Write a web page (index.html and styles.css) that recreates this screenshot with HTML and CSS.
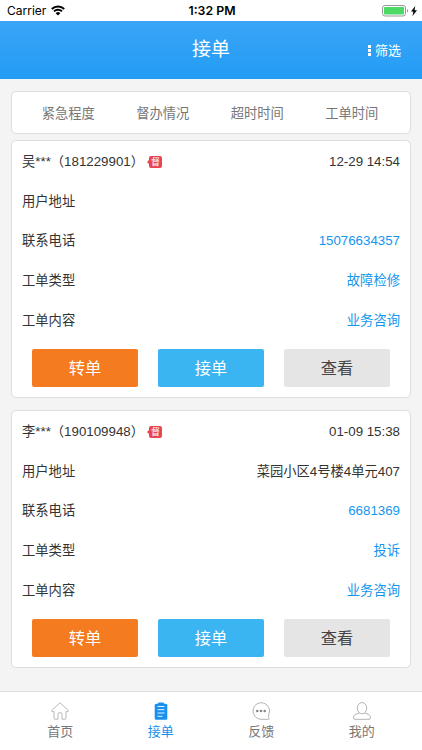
FILE: index.html
```html
<!DOCTYPE html>
<html lang="zh-CN">

<head>
    <meta charset="UTF-8">
    <meta name="viewport" content="width=device-width, initial-scale=1.0">
    <title>接单</title>
    <link rel="stylesheet" href="styles.css">
</head>

<body>
    <div class="status">
        <div class="carrier">
            <span>Carrier</span>
            <svg class="wifi" viewBox="0 0 14 11">
                <path d="M.8 4a8.800 8.800 0 0 1 12.400 0M3 6.400a5.700 5.700 0 0 1 8 0" fill="none" stroke="#000" stroke-width="2"/>
                <path d="M4.700 8.200a3.300 3.300 0 0 1 4.600 0L7 10.600z"/>
            </svg>
        </div>
        <div class="time">1:32 PM</div>
        <div class="power">
            <svg class="battery" viewBox="0 0 27 12">
                <rect x=".5" y=".5" width="23" height="10.500" rx="2.500" fill="none" stroke="#999"/>
                <rect x="2" y="2" width="20" height="7.500" rx="1" fill="#4cd964"/>
                <path d="M25 4v3.600q1.200-.5 1.200-1.800T25 4z" fill="#999"/>
            </svg>
            <svg class="bolt" viewBox="0 0 6 10">
                <path d="M4.300 0L0 5.600h2.400L1.500 10 6 4.200H3.500z"/>
            </svg>
        </div>
    </div>
    <div class="header">
        <h1>接单</h1>
        <div class="filter">
            <i class="dots"></i>
            <span>筛选</span>
        </div>
    </div>
    <div class="main">
        <ul class="sort">
            <li>紧急程度</li>
            <li>督办情况</li>
            <li>超时时间</li>
            <li>工单时间</li>
        </ul>
        <div class="card">
            <div class="row">
                <div class="name"><span>吴***（181229901）</span><b class="tag">督</b></div>
                <span>12-29 14:54</span>
            </div>
            <div class="row"><span>用户地址</span></div>
            <div class="row"><span>联系电话</span><span class="blue">15076634357</span></div>
            <div class="row"><span>工单类型</span><span class="blue">故障检修</span></div>
            <div class="row"><span>工单内容</span><span class="blue">业务咨询</span></div>
            <div class="btns">
                <div class="btn turn">转单</div>
                <div class="btn take">接单</div>
                <div class="btn look">查看</div>
            </div>
        </div>
        <div class="card">
            <div class="row">
                <div class="name"><span>李***（190109948）</span><b class="tag">督</b></div>
                <span>01-09 15:38</span>
            </div>
            <div class="row"><span>用户地址</span><span>菜园小区4号楼4单元407</span></div>
            <div class="row"><span>联系电话</span><span class="blue">6681369</span></div>
            <div class="row"><span>工单类型</span><span class="blue">投诉</span></div>
            <div class="row"><span>工单内容</span><span class="blue">业务咨询</span></div>
            <div class="btns">
                <div class="btn turn">转单</div>
                <div class="btn take">接单</div>
                <div class="btn look">查看</div>
            </div>
        </div>
    </div>
    <div class="tabbar">
        <div class="tab">
            <svg viewBox="0 0 18 18">
                <path d="M9 .7L.7 8.600q-.4 1 .6 1H3V16q0 1.200 1 1.200h3V11.500q0-.7.700-.7h2.600q.7 0 .7.700v5.700h3q1 0 1-1.200V9.600h1.700q1 0 .6-1z" fill="none" stroke="#b0b0b0" stroke-width=".9" stroke-linejoin="round"/>
            </svg>
            <span>首页</span>
        </div>
        <div class="tab active">
            <svg viewBox="0 0 18 18">
                <rect x="2.700" y="1.800" width="12.600" height="15.900" rx="1.500" fill="#1890f0"/>
                <rect x="6" y=".6" width="6" height="3" rx="1" fill="#1890f0"/>
                <path d="M5.500 4.500h7M5.500 7.700h7M5.500 11h7M5.500 14.300h5" stroke="#fff" stroke-width=".9"/>
            </svg>
            <span>接单</span>
        </div>
        <div class="tab">
            <svg viewBox="0 0 18 18">
                <path d="M16.800 12.500A8.300 8.300 0 1 0 9 17.300h7.700q1.200-.3.200-1.300-1-1.100-.1-3.500z" fill="none" stroke="#aaa" stroke-width=".9"/>
                <circle cx="5.300" cy="9" r="1.300" fill="#888"/>
                <circle cx="9" cy="9" r="1.300" fill="#888"/>
                <circle cx="12.700" cy="9" r="1.300" fill="#888"/>
            </svg>
            <span>反馈</span>
        </div>
        <div class="tab">
            <svg viewBox="0 0 18 18">
                <ellipse cx="9" cy="6.200" rx="4.700" ry="5.600" fill="none" stroke="#aaa" stroke-width=".9"/>
                <path d="M6.300 11.200C3 12 .5 12.600.5 15.800q0 1.500 1.500 1.500h14q1.500 0 1.500-1.500c0-3.200-2.500-3.800-5.800-4.600" fill="none" stroke="#aaa" stroke-width=".9"/>
            </svg>
            <span>我的</span>
        </div>
    </div>
</body>

</html>
```

FILE: styles.css
```css
body {
    display: flex;
    flex-direction: column;
    height: 750px;
    margin: 0;
    background-color: #f4f4f4;
    color: #333;
    font: 13.3px/20px "Liberation Sans", "Noto Sans CJK SC", sans-serif;
    overflow: hidden;
}

ul {
    list-style: none;
    margin: 0;
    padding: 0;
}

.status {
    display: grid;
    grid-template-columns: 1fr auto 1fr;
    align-items: center;
    height: 21px;
    padding: 0 5px 0 7px;
    background-color: #fff;
    color: #000;
    font: 12px/21px Inter, sans-serif;
}

.carrier {
    display: flex;
    align-items: center;
    gap: 5px;
}

.wifi {
    width: 14px;
    height: 11px;
}

.time {
    font-weight: 600;
    font-size: 12.3px;
}

.power {
    display: flex;
    align-items: center;
    justify-content: flex-end;
    gap: 2px;
}

.battery {
    width: 27px;
    height: 12px;
}

.bolt {
    width: 6px;
    height: 10px;
}

.header {
    display: grid;
    grid-template-columns: 1fr auto 1fr;
    align-items: center;
    height: 58px;
    padding: 0 21px;
    background: linear-gradient(#3aa5f6, #229cf5);
    color: #fff;
}

.header h1 {
    grid-column: 2;
    margin: 0;
    font-size: 19px;
    line-height: 28px;
    font-weight: normal;
}

.filter {
    display: flex;
    align-items: center;
    justify-content: flex-end;
    gap: 4px;
    padding-top: 1px;
    font-size: 13px;
}

.dots {
    width: 3px;
    height: 11px;
    background: repeating-linear-gradient(#fff 0 3px, transparent 3px 4px);
}

.main {
    flex: 1;
    padding: 12px 11px 0;
}

.sort {
    display: flex;
    box-sizing: border-box;
    height: 43px;
    padding: 1px 11px 0 9px;
    border: 1px solid #ddd;
    border-radius: 5px;
    background-color: #fff;
    color: #777;
    line-height: 41px;
    text-align: center;
}

.sort li {
    flex: 1;
}

.card {
    box-sizing: border-box;
    height: 258px;
    margin-top: 6px;
    padding: 1px 10px 0;
    border: 1px solid #ddd;
    border-radius: 5px;
    background-color: #fff;
}

.card + .card {
    margin-top: 12px;
}

.row {
    display: flex;
    justify-content: space-between;
    align-items: center;
    height: 39.8px;
}

.name {
    display: flex;
    align-items: center;
    gap: 5px;
}

.tag {
    position: relative;
    width: 13px;
    height: 12px;
    border-radius: 2px;
    background-color: #e84550;
    color: #fff;
    font-size: 9px;
    font-weight: normal;
    line-height: 12px;
    text-align: center;
}

.tag::before {
    content: "";
    position: absolute;
    left: -2px;
    top: 4px;
    border: 2px solid transparent;
    border-left: 0;
    border-right-color: #e84550;
}

.blue {
    color: #1296ee;
}

.btns {
    display: flex;
    gap: 20px;
    padding: 8px 10px 0;
}

.btn {
    flex: 1;
    height: 38px;
    border-radius: 2px;
    color: #fff;
    font-size: 16.3px;
    line-height: 38px;
    text-align: center;
}

.turn {
    background-color: #f47b20;
}

.take {
    background-color: #3bb4f2;
}

.look {
    background-color: #e5e5e5;
    color: #444;
}

.tabbar {
    display: flex;
    box-sizing: border-box;
    height: 59px;
    padding: 10px 10px 0;
    border-top: 1px solid #ddd;
    background-color: #fff;
    color: #777;
}

.tab {
    display: flex;
    flex: 1;
    flex-direction: column;
    align-items: center;
    gap: 2px;
    font-size: 13px;
}

.tab svg {
    width: 18px;
    height: 18px;
}

.active {
    color: #1890f0;
}
```
